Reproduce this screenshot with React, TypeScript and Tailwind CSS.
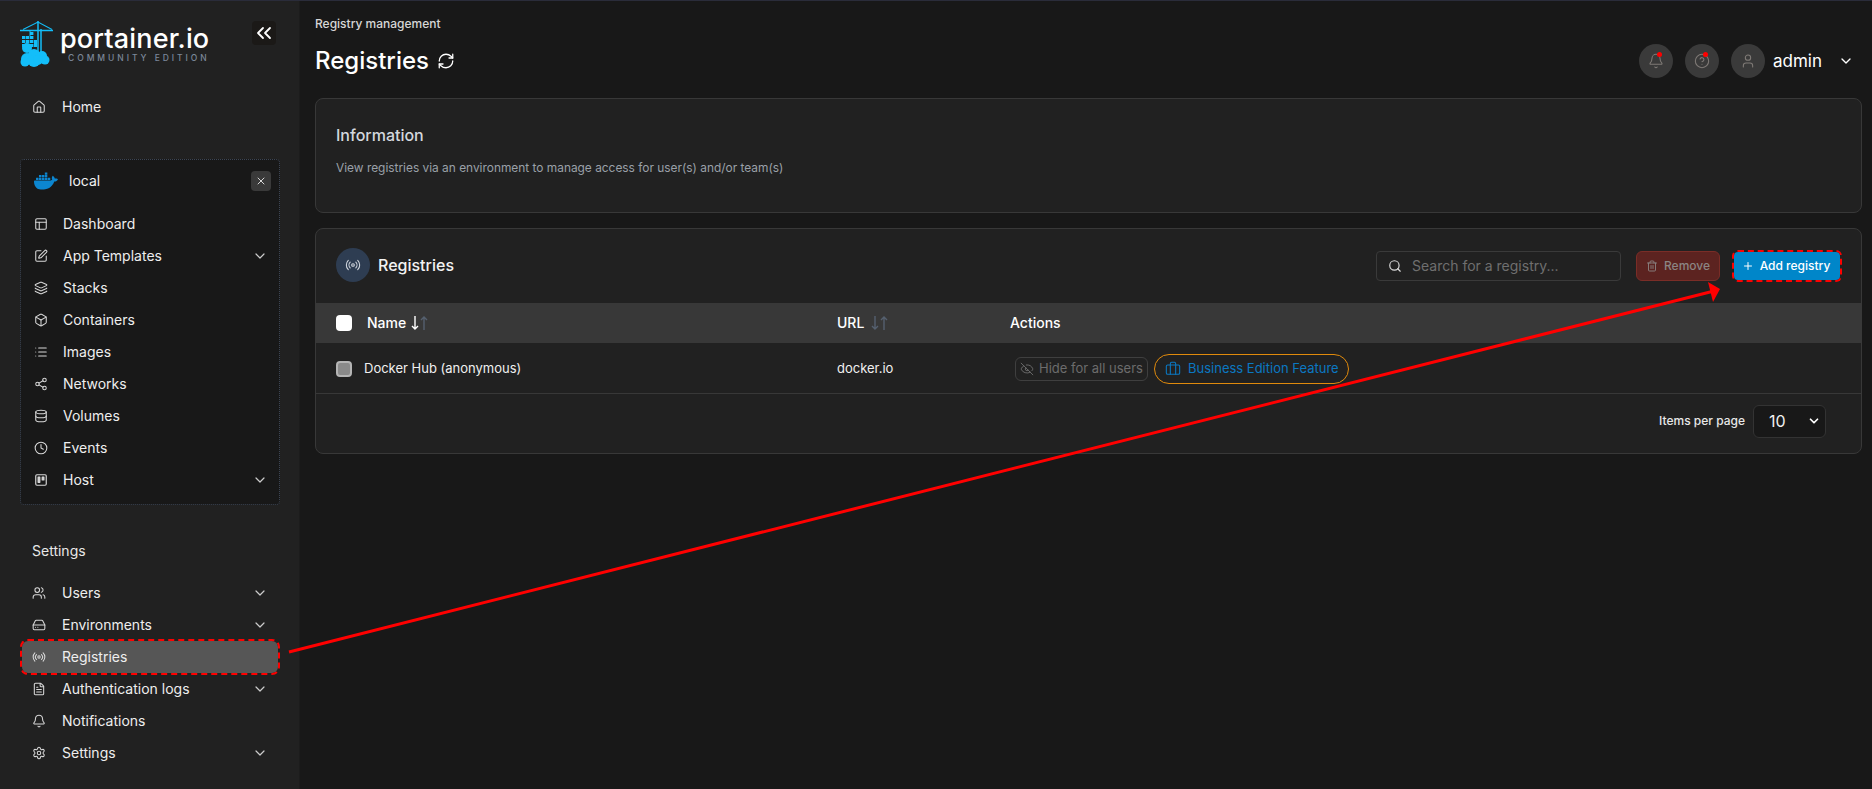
import React from "react";
import {
  Home, PanelsTopLeft, SquarePen, Layers, Box, List, Share2, Database, Clock, Users, HardDrive, Radio,
  FileText, Bell, Settings, ChevronDown, X, ChevronsLeft, RefreshCw, CircleHelp, User, Search, Trash2,
  Plus, EyeOff, Briefcase,
} from "lucide-react";
import { SiDocker } from "react-icons/si";

const HostIcon = ({ className }: { className?: string }) => (
  <svg viewBox="0 0 24 24" fill="none" stroke="currentColor" strokeWidth="2" strokeLinecap="round" strokeLinejoin="round" className={className}>
    <rect x="3" y="3" width="18" height="18" rx="2" />
    <rect x="7" y="7" width="3" height="9" fill="currentColor" />
    <rect x="14" y="7" width="3" height="5" fill="currentColor" />
  </svg>
);

const SortArrow = ({ up, className }: { up?: boolean; className?: string }) => (
  <svg viewBox="0 0 8 14" fill="none" stroke="currentColor" strokeWidth="1.4" className={`w-2 h-[14px] ${className ?? ""}`}>
    {up ? <path d="M4 14V1M1 4L4 1L7 4" /> : <path d="M4 0V13M1 10L4 13L7 10" />}
  </svg>
);

const Logo = () => (
  <svg viewBox="0 0 33 47" className="w-[33px] h-[47px] shrink-0" fill="none">
    <g stroke="#13bef9">
      <path d="M0 9.5H33" strokeWidth="1.6" />
      <path d="M3 8.5L18 1L32 8.5" strokeWidth="1.1" />
      <path d="M18 0V33" strokeWidth="1.5" />
      <path d="M21 8V33" strokeWidth="1.5" />
      <path d="M10 10V15" strokeWidth="1" />
    </g>
    <g fill="#13bef9">
      <rect x="2" y="15" width="3.4" height="3" />
      <rect x="6" y="15" width="3.4" height="3" />
      <rect x="10" y="15" width="3.4" height="3" />
      <rect x="2" y="19" width="3.4" height="3" />
      <rect x="6" y="19" width="3.4" height="3" />
      <rect x="10" y="19" width="3.4" height="3" />
      <rect x="10" y="11" width="3.4" height="3" />
      <rect x="2" y="23" width="11.5" height="3" />
      <rect x="14" y="19" width="3" height="7" />
      <circle cx="7" cy="27" r="5" />
      <circle cx="7" cy="38" r="6" />
      <circle cx="14" cy="34" r="6" />
      <circle cx="22" cy="35" r="5" />
      <circle cx="25" cy="39" r="4.5" />
      <circle cx="14" cy="40" r="6" />
      <circle cx="18" cy="39" r="5" />
      <circle cx="5" cy="41" r="4.5" />
    </g>
  </svg>
);

type Item = { label: string; icon: React.ElementType; chevron?: boolean };

const NavRow = ({ item, inset, active }: { item: Item; inset?: boolean; active?: boolean }) => {
  const I = item.icon;
  return (
    <div className={`h-8 flex items-center text-sm text-[#eeeeee] ${inset ? "pl-[13px] pr-[11px]" : active ? "pl-[10px] pr-[10px]" : "pl-[12px] pr-[11px]"}`}>
      <I className="w-[14px] h-[14px] text-[#d8d8d8] shrink-0" strokeWidth={1.8} />
      <span className={`flex-1 ${inset ? "ml-[15px]" : "ml-[16px]"}`}>{item.label}</span>
      {item.chevron && <ChevronDown className="w-4 h-4 text-[#cccccc]" strokeWidth={1.8} />}
    </div>
  );
};

const envItems: Item[] = [
  { label: "Dashboard", icon: PanelsTopLeft },
  { label: "App Templates", icon: SquarePen, chevron: true },
  { label: "Stacks", icon: Layers },
  { label: "Containers", icon: Box },
  { label: "Images", icon: List },
  { label: "Networks", icon: Share2 },
  { label: "Volumes", icon: Database },
  { label: "Events", icon: Clock },
  { label: "Host", icon: HostIcon, chevron: true },
];

const Sidebar = () => (
  <aside className="w-[300px] shrink-0 h-full bg-[#212121] border-r border-[#1c1c1c] px-5">
    <div className="h-[90px] flex items-start pt-[20px] relative">
      <Logo />
      <div className="ml-[7px] flex flex-col">
        <span className="text-[27px] leading-[26px] mt-[5px] font-medium text-white tracking-[0.15px]">portainer.io</span>
        <span className="text-[8.5px] leading-[10px] mt-[1px] ml-2 tracking-[2.95px] text-[#7b8799] font-medium">COMMUNITY EDITION</span>
      </div>
      <div className="absolute left-[232px] top-[20px] w-6 h-6 rounded bg-[#1b1917] flex items-center justify-center">
        <ChevronsLeft className="w-6 h-6 text-white" strokeWidth={1.8} />
      </div>
    </div>
    <NavRow item={{ label: "Home", icon: Home }} />
    <div className="mt-9 w-[260px] rounded border border-dotted border-[#3c4554] bg-[#181818]">
      <div className="h-[48px] flex items-center pl-[13px] pr-2 pb-[6px]">
        <SiDocker className="w-6 h-6 text-[#0c86d0]" />
        <span className="ml-[11px] text-sm text-[#f2f2f2] flex-1">local</span>
        <div className="w-5 h-5 rounded bg-[#3a3a3a] flex items-center justify-center">
          <X className="w-3 h-3 text-[#d8d8d8]" />
        </div>
      </div>
      {envItems.map((i) => (
        <NavRow key={i.label} item={i} inset />
      ))}
      <div className="h-2" />
    </div>
    <div className="mt-9 h-5 pl-3 text-sm leading-5 text-[#e8e8e8]">Settings</div>
    <div className="mt-4">
      <NavRow item={{ label: "Users", icon: Users, chevron: true }} />
      <NavRow item={{ label: "Environments", icon: HardDrive, chevron: true }} />
      <div className="ml-[2px] mr-[1px] rounded-md bg-[#565656] outline-2 outline-dashed outline-[#ff0000]">
        <NavRow item={{ label: "Registries", icon: Radio }} active />
      </div>
      <NavRow item={{ label: "Authentication logs", icon: FileText, chevron: true }} />
      <NavRow item={{ label: "Notifications", icon: Bell }} />
      <NavRow item={{ label: "Settings", icon: Settings, chevron: true }} />
    </div>
  </aside>
);

const RoundIcon = ({ icon: I, dot }: { icon: React.ElementType; dot?: boolean }) => (
  <div className="relative w-[34px] h-[34px] rounded-full bg-[#3a3a3a] flex items-center justify-center">
    <I className="w-4 h-4 text-[#7f7a76]" strokeWidth={1.6} />
    {dot && <span className="absolute left-[18px] top-[8px] w-[5px] h-[5px] rounded-full bg-[#ff0000]" />}
  </div>
);

const Header = () => (
  <header className="flex justify-between pr-[2px]">
    <div>
      <div className="text-xs leading-4 font-medium text-[#d6d6d6]">Registry management</div>
      <div className="mt-[13px] h-8 flex items-center text-white">
        <span className="text-2xl leading-8 font-medium">Registries</span>
        <RefreshCw className="w-[18px] h-[18px] ml-2" strokeWidth={1.7} />
      </div>
    </div>
    <div className="self-end -mb-px flex items-center">
      <RoundIcon icon={Bell} dot />
      <div className="w-3" />
      <RoundIcon icon={CircleHelp} dot />
      <div className="w-3" />
      <RoundIcon icon={User} />
      <span className="ml-2 pt-px text-[17px] text-white">admin</span>
      <ChevronDown className="ml-4 mr-[6px] w-4 h-4 text-white" strokeWidth={2} />
    </div>
  </header>
);

const Card = ({ children, className }: { children: React.ReactNode; className?: string }) => (
  <section className={`rounded-lg border border-[#383838] bg-[#212121] ${className ?? ""}`}>{children}</section>
);

const Table = () => (
  <Card className="mt-[15px] h-[226px] flex flex-col">
    <div className="h-[74px] flex items-center pl-[20px] pr-[21px]">
      <div className="-mt-[2px] w-[34px] h-[34px] rounded-full bg-[#2e3d52] flex items-center justify-center">
        <Radio className="w-4 h-4 text-[#d3d8df]" strokeWidth={1.6} />
      </div>
      <span className="-mt-[2px] ml-2 text-base font-medium text-[#f3f3f3]">Registries</span>
      <div className="ml-auto w-[245px] h-[30px] rounded border border-[#3a3a3a] flex items-center pl-[11px]">
        <Search className="w-[14px] h-[14px] text-[#d8d8d8]" strokeWidth={2} />
        <span className="ml-[10px] text-sm text-[#6f6f6f]">Search for a registry...</span>
      </div>
      <div className="ml-[15px] w-[84px] h-[30px] rounded-md border border-[#7a2d27] bg-[#5c2320] flex items-center justify-center text-xs font-medium text-[#8b8583]">
        <Trash2 className="w-3 h-3 mr-[6px]" strokeWidth={1.8} />
        Remove
      </div>
      <div className="ml-[14px] w-[106px] h-[28px] rounded-sm bg-[#0086c9] outline-2 outline-dashed outline-[#ff0000] flex items-center justify-center text-xs font-medium text-white">
        <Plus className="w-3 h-3 mr-[6px] -ml-[2px]" strokeWidth={2} />
        Add registry
      </div>
    </div>
    <div className="h-10 bg-[#383838] grid grid-cols-[501px_173px_1fr] items-center pl-[20px] text-sm text-white">
      <div className="flex items-center">
        <div className="w-4 h-4 rounded bg-white" />
        <span className="ml-[15px] font-medium">Name</span>
        <SortArrow className="ml-[5px] text-white" />
        <SortArrow up className="ml-[1px] text-[#55606f]" />
      </div>
      <div className="flex items-center">
        <span className="font-medium">URL</span>
        <SortArrow className="ml-[7px] text-[#55606f]" />
        <SortArrow up className="ml-[1px] text-[#55606f]" />
      </div>
      <div className="font-medium">Actions</div>
    </div>
    <div className="h-[51px] pt-px grid grid-cols-[501px_173px_1fr] items-center pl-[20px] border-b border-[#383838] text-[13px] text-[#f0f0f0]">
      <div className="flex items-center">
        <div className="w-4 h-4 rounded border-2 border-[#b5b5b5] bg-[#8a8a8a]" />
        <span className="ml-3">Docker Hub (anonymous)</span>
      </div>
      <div>docker.io</div>
      <div className="flex items-center pl-[5px]">
        <div className="w-[133px] h-6 rounded-md border border-[#3f3f3f] flex items-center justify-center text-[13px] text-[#6c6c6c]">
          <EyeOff className="w-[14px] h-[14px] mr-[5px]" strokeWidth={1.6} />
          Hide for all users
        </div>
        <div className="ml-[6px] w-[195px] h-[30px] rounded-full border border-[#e08a0c] flex items-center pl-[10px] text-[13px] text-[#0b78c2]">
          <Briefcase className="w-4 h-4 mr-[7px]" strokeWidth={1.6} />
          Business Edition Feature
        </div>
      </div>
    </div>
    <div className="flex-1 flex items-center justify-end pr-[35px] pb-[5px]">
      <span className="text-xs font-medium text-[#e8e8e8]">Items per page</span>
      <div className="ml-2 w-[73px] h-[33px] rounded-md border border-[#333333] bg-[#181818] flex items-center pl-[15px] pr-1 text-base text-[#f0f0f0]">
        <span className="flex-1">10</span>
        <ChevronDown className="w-[14px] h-[14px] text-white" strokeWidth={3} />
      </div>
    </div>
  </Card>
);

export default function App() {
  return (
    <div className="relative w-full h-[789px] overflow-hidden bg-[#181818] border-t border-[#2a2c3a] flex" style={{ fontFamily: "Inter, sans-serif" }}>
      <Sidebar />
      <main className="flex-1 min-w-0 pl-[15px] pr-[10px] pt-[15px]">
        <Header />
        <Card className="mt-[21px] h-[115px] pl-[20px] pr-[19px] pt-[26px]">
          <div className="text-base leading-5 font-medium text-[#d4d8de]">Information</div>
          <div className="mt-[14px] text-[11.9px] leading-[18px] text-[#9aa0a8]">View registries via an environment to manage access for user(s) and/or team(s)</div>
        </Card>
        <Table />
      </main>
      <svg className="absolute left-0 top-0 w-[1872px] h-[789px] pointer-events-none" viewBox="0 0 1872 789">
        <line x1="289" y1="651" x2="1714" y2="290" stroke="#ff0000" strokeWidth="3" />
        <polygon points="1708,281 1720,288 1713,301" fill="#ff0000" />
      </svg>
    </div>
  );
}
